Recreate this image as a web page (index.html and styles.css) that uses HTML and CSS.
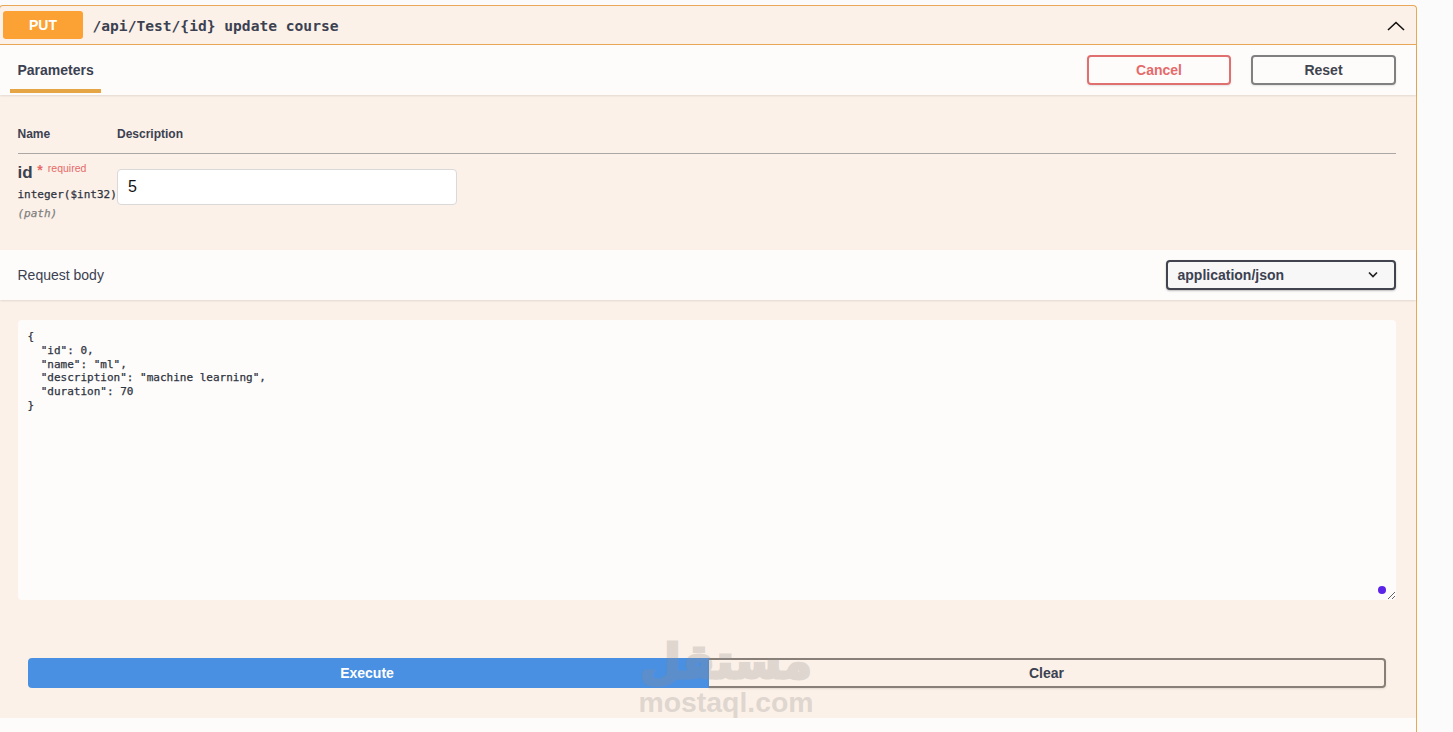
FILE: index.html
```html
<!DOCTYPE html>
<html lang="en">
<head>
<meta charset="utf-8">
<title>PUT /api/Test/{id}</title>
<link rel="stylesheet" href="styles.css">
</head>
<body>
<div class="opblock">
  <header class="summary">
    <span class="method">PUT</span>
    <span class="path">/api/Test/{id} update course</span>
    <svg class="collapse" width="20" height="20" viewBox="0 0 20 20"><path d="M2 15 L10 7.5 L18 15" fill="none" stroke="#111" stroke-width="1.6"/></svg>
  </header>
  <div class="section-head tabs-head">
    <div class="tab">Parameters</div>
    <div class="actions">
      <button class="btn cancel">Cancel</button>
      <button class="btn reset">Reset</button>
    </div>
  </div>
  <section class="params">
    <div class="param-head">
      <div class="col-name">Name</div>
      <div>Description</div>
    </div>
    <div class="param-row">
      <div class="col-name param-info">
        <div class="param-name">id <sup class="star">*</sup><sup class="req">required</sup></div>
        <div class="param-type">integer($int32)</div>
        <div class="param-in">(path)</div>
      </div>
      <input class="param-input" type="text" value="5">
    </div>
  </section>
  <div class="section-head body-head">
    <div class="body-title">Request body</div>
    <div class="select">application/json
      <svg width="12" height="8" viewBox="0 0 12 8"><path d="M2 1.5 L6 5.5 L10 1.5" fill="none" stroke="#222" stroke-width="1.7"/></svg>
    </div>
  </div>
  <section class="body-area">
    <div class="editor">
      <textarea class="code" spellcheck="false">{
  "id": 0,
  "name": "ml",
  "description": "machine learning",
  "duration": 70
}</textarea>
      <span class="dot"></span>
    </div>
    <div class="exec-row">
      <button class="btn-exec">Execute</button>
      <button class="btn-clear">Clear</button>
    </div>
  </section>
  <div class="foot"></div>
</div>
<div class="watermark">
  <div class="wm-ar" lang="ar" dir="rtl">مستقل</div>
  <div class="wm-en">mostaql.com</div>
</div>
</body>
</html>
```
FILE: styles.css
```css
* { box-sizing: border-box; }
html, body { margin: 0; height: 100%; overflow: hidden; }
body {
  background: #fcfbfb;
  font-family: "Liberation Sans", Arial, sans-serif;
  color: #3b4151;
  padding-top: 5px;
  position: relative;
}
.opblock {
  width: 1418px;
  height: 727px;
  margin-left: -1px;
  border: 1px solid #e8a857;
  border-bottom: 0;
  border-radius: 4px 4px 0 0;
  background: #fcf1e8;
}
.summary {
  display: flex;
  align-items: center;
  height: 39px;
  padding: 0 3px;
  border-bottom: 1px solid #e8a857;
}
.method {
  width: 80px;
  height: 28px;
  line-height: 28px;
  text-align: center;
  background: #fca234;
  color: #fff;
  font-weight: 700;
  font-size: 14px;
  border-radius: 3px;
}
.path {
  margin-left: 9.5px;
  font-family: "DejaVu Sans Mono", monospace;
  font-size: 14.6px;
  font-weight: 700;
  color: #3b4151;
  flex: 1;
}
.collapse { margin-right: 7px; }
.section-head {
  display: flex;
  align-items: center;
  justify-content: space-between;
  background: #fefcfb;
  box-shadow: 0 1px 2px rgba(0,0,0,.1);
}
.tabs-head {
  height: 50px;
  padding: 0 20px 0 10px;
  position: relative;
}
.tab {
  align-self: flex-start;
  width: 91px;
  height: 48px;
  padding: 0 0 0 7.5px;
  line-height: 50px;
  font-size: 14px;
  font-weight: 700;
  border-bottom: 4px solid #e6a545;
}
.actions { display: flex; gap: 20px; }
.btn {
  width: 144px;
  height: 30px;
  background: transparent;
  border: 2px solid #808080;
  border-radius: 4px;
  font-family: inherit;
  font-size: 14px;
  font-weight: 700;
  color: #41444e;
  box-shadow: 0 1px 2px rgba(0,0,0,.1);
}
.btn.cancel { border-color: #e07070; color: #e56a6a; }
.btn.reset { width: 145px; }
.params { height: 155px; padding: 0 20px 0 17.5px; }
.param-head {
  display: flex;
  height: 59px;
  padding-top: 32px;
  font-size: 12px;
  font-weight: 700;
  line-height: 15px;
  border-bottom: 1px solid #aaa7a4;
}
.col-name { width: 99.5px; flex: none; }
.param-row { display: flex; padding-top: 15px; }
.param-name { font-size: 17px; font-weight: 700; line-height: 20px; white-space: nowrap; margin-top: -9px; height: 26px; padding-top: 3px; }
.star { color: #e56a6a; font-size: 14px; line-height: 0; vertical-align: 3px; }
.req { color: #e56a6a; font-size: 10.5px; font-weight: 400; line-height: 0; vertical-align: 6px; margin-left: 5px; }
.param-type {
  font-family: "DejaVu Sans Mono", monospace;
  font-size: 11px;
  font-weight: 400;
  line-height: 14px;
  margin-top: 2px;
  white-space: nowrap;
  color: #2f3341;
  -webkit-text-stroke: .25px #2f3341;
}
.param-in {
  font-family: "DejaVu Sans Mono", monospace;
  font-size: 11px;
  font-style: italic;
  font-weight: 400;
  color: #808080;
  -webkit-text-stroke: .25px #808080;
  line-height: 14px;
  margin-top: 5px;
}
.param-input {
  width: 340px;
  height: 36px;
  padding: 0 10px;
  background: #fff;
  border: 1px solid #d9d9d9;
  border-radius: 4px;
  font-family: "Liberation Sans", Arial, sans-serif;
  font-size: 16px;
  color: #111;
}
.body-head { height: 50px; padding: 0 20px 0 17.5px; }
.body-title { font-size: 14px; }
.select {
  display: flex;
  align-items: center;
  justify-content: space-between;
  width: 230px;
  height: 30px;
  padding: 0 15px 0 9.5px;
  background: #f7f7f7;
  border: 2px solid #41444e;
  border-radius: 4px;
  font-size: 14px;
  font-weight: 700;
  box-shadow: 0 1px 2px rgba(0,0,0,.25);
}
.body-area { height: 418px; padding: 20px 20px 0 18px; }
.editor { position: relative; height: 280px; }
.code {
  display: block;
  width: 100%;
  height: 100%;
  padding: 10px 9.5px;
  border: 0;
  border-radius: 4px;
  outline: 0;
  resize: vertical;
  background: #fefcfa;
  font-family: "DejaVu Sans Mono", monospace;
  font-size: 11px;
  font-weight: 400;
  line-height: 13.8px;
  color: #2f3341;
  -webkit-text-stroke: .25px #2f3341;
}
.dot {
  position: absolute;
  right: 10px;
  bottom: 6px;
  width: 8px;
  height: 8px;
  border-radius: 50%;
  background: #5b24e8;
}
.exec-row { display: flex; margin: 58px 10px 0 10px; }
.btn-exec, .btn-clear {
  flex: none;
  height: 30px;
  font-family: inherit;
  font-size: 14px;
  font-weight: 700;
}
.btn-exec {
  width: 681px;
  padding: 0 9px 0 6px;
  background: #4a90e2;
  color: #fff;
  border: 0;
  border-radius: 4px 0 0 4px;
}
.btn-clear {
  width: 677px;
  padding: 0 8px 0 8px;
  background: transparent;
  color: #3b4151;
  border: 2px solid #888078;
  border-left: 0;
  border-radius: 0 4px 4px 0;
  box-shadow: 0 1px 2px rgba(0,0,0,.1);
}
.foot { height: 14px; background: #fefcfb; }
.watermark {
  position: absolute;
  left: 638px;
  top: 637px;
  width: 176px;
  text-align: center;
  color: #8c8c8c;
  opacity: .26;
  pointer-events: none;
}
.wm-ar {
  font-family: "DejaVu Sans", sans-serif;
  font-weight: 700;
  font-size: 47px;
  line-height: 50px;
  height: 50px;
  white-space: nowrap;
  -webkit-text-stroke: 3px #8c8c8c;
}
.wm-en {
  font-family: "Liberation Sans", Arial, sans-serif;
  font-weight: 700;
  font-size: 28.4px;
  line-height: 28px;
  margin-top: 1px;
  white-space: nowrap;
}
```
